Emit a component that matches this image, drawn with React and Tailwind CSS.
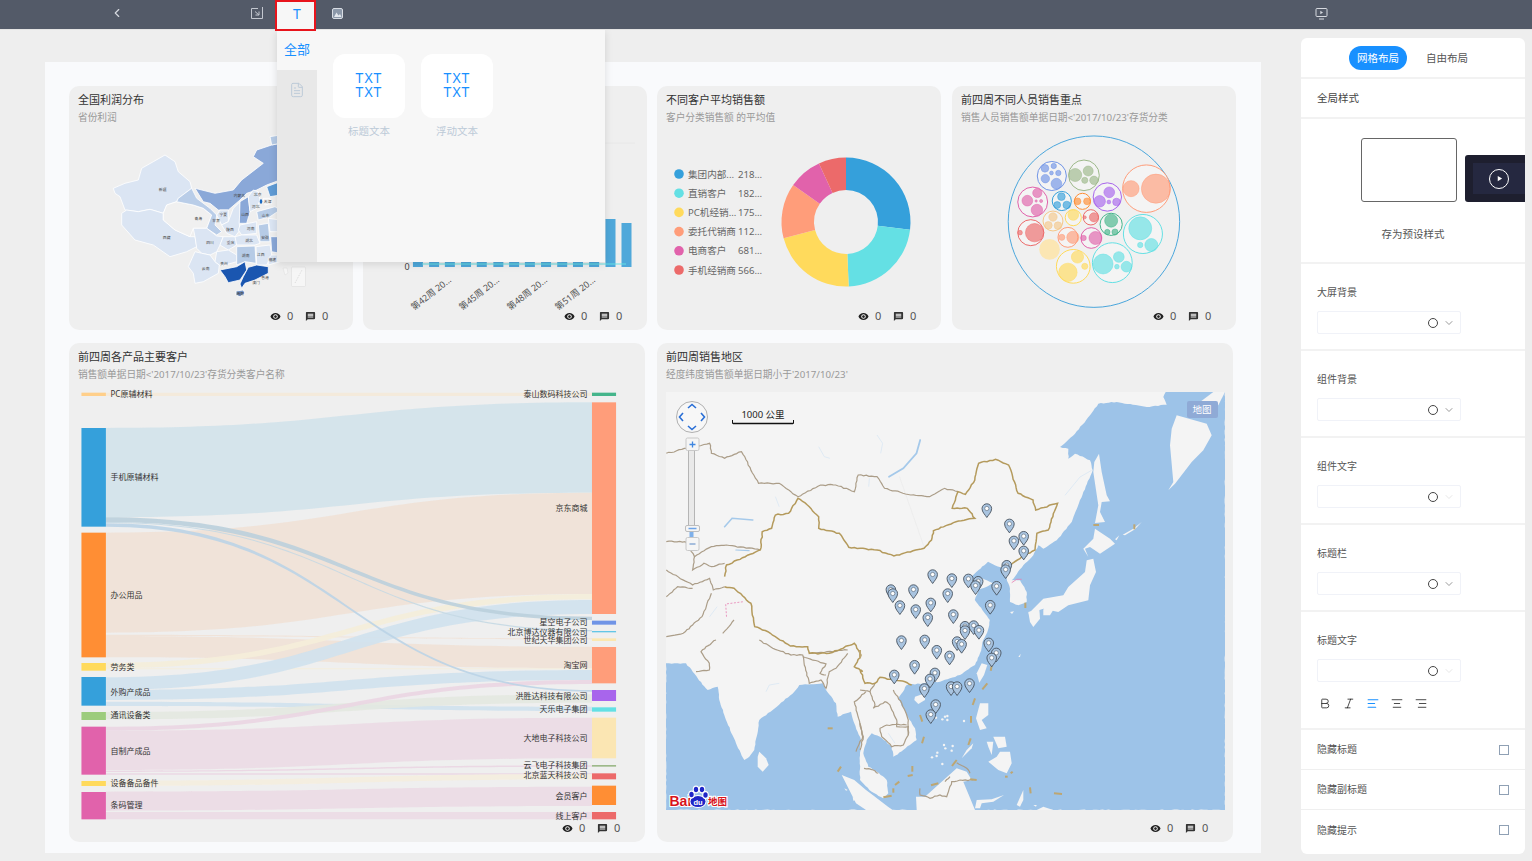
import { ChevronLeft, ChevronDown, Bold, Italic, AlignLeft, AlignCenter, AlignRight, FileText } from 'lucide-react';
import { MdRemoveRedEye, MdMessage } from 'react-icons/md';

// traced coordinates -> page coordinates
const Z6 = (x, y) => [655 + x / 2.658, 340 + y / 3];
const C1 = (x, y) => [100 + x / 3, 130 + y / 3];
const C2 = (x, y) => [1000 + x / 3, 392 + y / 3];
const C3 = (x, y) => [860 + x / 3, 640 + y / 3];
const C4 = (x, y) => [666 + x / 3, 640 + y / 3];

const pts = (fn, list) =>
  list
    .trim()
    .split(/\s+/)
    .map((pair) => {
      const [x, y] = pair.split(',').map(Number);
      return fn(x, y);
    });

const toPoints = (arr) => arr.map((p) => `${p[0].toFixed(1)},${p[1].toFixed(1)}`).join(' ');

let noiseStep = 0;
const noise = () => {
  noiseStep += 1;
  const v = Math.sin(noiseStep * 12.9898) * 43758.5453;
  return (v - Math.floor(v) - 0.5) * 2;
};

// borders and coasts are wobbly in the map tiles
const wobble = (arr, amp) => {
  const out = [];
  for (let i = 0; i < arr.length - 1; i += 1) {
    const [x0, y0] = arr[i];
    const [x1, y1] = arr[i + 1];
    const len = Math.hypot(x1 - x0, y1 - y0) || 1;
    const n = Math.max(1, Math.ceil(len / 3));
    for (let k = 0; k < n; k += 1) {
      const t = k / n;
      const off = k === 0 ? 0 : noise() * amp;
      out.push([x0 + (x1 - x0) * t - ((y1 - y0) / len) * off, y0 + (y1 - y0) * t + ((x1 - x0) / len) * off]);
    }
  }
  out.push(arr[arr.length - 1]);
  return out;
};

const Footer = () => (
  <div className="mt-auto mb-[8px] h-3 flex items-center justify-end pr-[25px] text-[#555] text-[11px] leading-3">
    <MdRemoveRedEye className="w-[11px] h-[11px] text-[#222]" />
    <span className="ml-[6px] w-[6px]">0</span>
    <MdMessage className="ml-[12px] w-[11px] h-[11px] text-[#333]" />
    <span className="ml-[6px] w-[6px]">0</span>
  </div>
);

const Card = ({ title, sub, className, children }) => (
  <div className={`flex flex-col bg-[#efefef] rounded-[10px] overflow-hidden ${className}`}>
    <div className="pl-[9px] pt-[7px] h-[38px]">
      <div className="text-[11px] leading-[14px] text-[#333]">{title}</div>
      <div className="mt-[4px] text-[9.7px] leading-[13px] text-[#999]">{sub}</div>
    </div>
    {children}
    <Footer />
  </div>
);

const provinces = [
  ['40,175 75,160 115,150 125,115 160,95 195,75 225,95 235,125 270,155 275,175 235,205 230,215 200,225 190,250 150,238 115,245 75,240 60,200 45,190', '#dbe5f3'],
  ['65,250 80,240 115,245 150,238 190,250 190,270 225,300 270,320 285,320 290,350 260,365 210,380 160,345 105,330 65,285', '#dbe5f3'],
  ['190,250 200,225 230,215 280,225 310,235 335,255 320,295 280,295 270,320 225,300 190,270', '#f0f0f0'],
  ['235,205 275,175 290,205 330,235 350,255 345,285 365,305 350,315 320,295 335,255 310,235 280,225 230,215', '#b9cde8'],
  ['285,175 345,190 400,180 425,150 490,100 460,80 470,60 515,45 540,40 540,150 500,165 470,180 440,190 420,210 385,240 355,240 330,220 310,215', '#8aa8d8'],
  ['510,20 540,15 540,40 515,45', '#b6cbe6'],
  ['360,240 385,240 385,275 365,285 350,255', '#dbe5f3'],
  ['400,235 420,215 418,280 420,300 405,320 380,310 365,285 385,275', '#dbe5f3'],
  ['420,215 445,200 450,245 440,280 418,280', '#8aa8d8'],
  ['445,200 460,180 475,185 480,210 470,235 450,245', '#dbe5f3'],
  ['500,170 540,155 540,195 510,200', '#5f9bd5'],
  ['490,205 510,205 515,220 495,225', '#f0f0f0'],
  ['470,245 525,230 540,240 510,260 475,270', '#b6cbe6'],
  ['420,285 470,275 470,310 425,315 415,300', '#dbe5f3'],
  ['505,265 540,270 540,305 510,305', '#dbe5f3'],
  ['475,285 505,280 510,335 480,335', '#b6cbe6'],
  ['405,320 425,315 470,315 480,340 465,345 410,345 400,330', '#dbe5f3'],
  ['280,295 320,295 350,318 370,320 360,345 350,365 330,375 305,370 290,355 285,320', '#dbe5f3'],
  ['370,320 405,320 410,345 385,360 360,345', '#dbe5f3'],
  ['265,410 285,365 305,370 330,375 345,395 358,405 355,430 310,455 285,460 280,430', '#dbe5f3'],
  ['345,395 350,365 385,360 410,375 410,395 375,405 358,405', '#dbe5f3'],
  ['410,350 465,348 468,400 435,395 410,405', '#b6cbe6'],
  ['468,350 510,345 515,375 500,405 470,405', '#dbe5f3'],
  ['512,320 540,320 540,370 515,365', '#8aa8d8'],
  ['505,385 515,375 540,375 540,395 505,405', '#dbe5f3'],
  ['360,420 410,410 435,395 440,420 420,450 385,458 375,440', '#1a56b0'],
  ['445,412 470,405 505,410 505,430 465,450 435,460 425,475 420,462 430,440', '#1a56b0'],
  ['408,483 430,480 435,490 420,500 408,495', '#6f90c4'],
];

const provinceLabels = [
  ['新疆', 188, 177], ['西藏', 200, 321], ['青海', 295, 264], ['甘肃', 348, 272], ['宁夏', 370, 252], ['内蒙古', 418, 195],
  ['山西', 435, 252], ['四川', 330, 338], ['云南', 317, 415], ['贵州', 372, 400], ['湖南', 437, 376], ['江西', 482, 372],
  ['福建', 517, 388], ['安徽', 495, 323], ['湖北', 447, 332], ['河南', 452, 295], ['陕西', 390, 298], ['重庆', 392, 338],
  ['山东', 497, 256], ['河北', 467, 228], ['北京', 473, 193], ['天津', 503, 213], ['香港', 495, 442], ['澳门', 468, 458],
  ['海南', 420, 490],
];

const ProfitMap = () => (
  <svg className="block" width="284" height="186" viewBox="69 124 284 186">
    {provinces.map(([list, fill]) => (
      <polygon key={list} points={toPoints(pts(C1, list))} fill={fill} stroke="#fff" strokeWidth="0.8" />
    ))}
    <ellipse cx="261" cy="201.5" rx="1.3" ry="2.2" fill="#1c6ac0" />
    <rect x="291.5" y="267" width="14" height="19.5" rx="1" fill="#f6f6f6" stroke="#ddd" strokeWidth="0.6" />
    <path d="M295 283 302 270" stroke="#bbb" strokeDasharray="1 1" strokeWidth="0.5" />
    <path d="M283 268 287 268 288 273 285 275Z" fill="#f6f6f6" stroke="#ddd" strokeWidth="0.5" />
    {provinceLabels.map(([name, x, y]) => {
      const [px, py] = C1(x, y);
      return (
        <text key={name} x={px} y={py} textAnchor="middle" dominantBaseline="central" fontSize="3.8" fill="#444">{name}</text>
      );
    })}
  </svg>
);

const barXs = [996, 1035, 1073, 1112, 1150, 1190, 1228, 1266, 1305, 1344, 1382, 1421];

const WeekBars = () => (
  <svg className="block" width="284" height="186" viewBox="363 124 284 186">
    <line x1="363" y1="143" x2="635" y2="143" stroke="#e8e8e8" />
    {barXs.map((x) => (
      <rect key={x} x={x / 2.412} y="260" width="10" height="7" fill="#4fa8da" />
    ))}
    <rect x="605.5" y="219" width="10" height="48" fill="#4fa8da" />
    <rect x="621.5" y="223" width="10" height="44" fill="#4fa8da" />
    <line x1="422" y1="264" x2="626" y2="264" stroke="#64e0e4" strokeWidth="1" />
    <text x="407" y="266" textAnchor="middle" dominantBaseline="central" fontSize="9" fill="#444">0</text>
    {[['第42周 20...', 452], ['第45周 20...', 500], ['第48周 20...', 548], ['第51周 20...', 596]].map(([label, x]) => (
      <text key={label} x={x} y="281" textAnchor="end" fontSize="9" fill="#555" transform={`rotate(-38 ${x} 281)`}>{label}</text>
    ))}
  </svg>
);

const donutData = [
  ['集团内部...', '218...', 0, 96.8, '#35a0db'],
  ['直销客户', '182...', 96.8, 177.6, '#64e0e4'],
  ['PC机经销...', '175...', 177.6, 255.3, '#ffda5c'],
  ['委托代销商', '112...', 255.3, 305, '#ff9d7a'],
  ['电商客户', '681...', 305, 335.2, '#e162ab'],
  ['手机经销商', '566...', 335.2, 360, '#ec6a6a'],
];

const arc = (start, end, r0, r1, cx, cy) => {
  const pt = (a, r) => {
    const t = ((a - 90) * Math.PI) / 180;
    return `${cx + r * Math.cos(t)} ${cy + r * Math.sin(t)}`;
  };
  const big = end - start > 180 ? 1 : 0;
  return `M${pt(start, r1)} A${r1} ${r1} 0 ${big} 1 ${pt(end, r1)} L${pt(end, r0)} A${r0} ${r0} 0 ${big} 0 ${pt(start, r0)} Z`;
};

const Donut = () => (
  <svg className="block" width="284" height="186" viewBox="657 124 284 186">
    {donutData.map(([name, value, a, b, color], i) => {
      const y = 174 + i * 19.2;
      return (
        <g key={name}>
          <circle cx="679" cy={y} r="4.8" fill={color} />
          <text x="688" y={y} dominantBaseline="central" fontSize="9.6" fill="#666">{name}</text>
          <text x="738" y={y} dominantBaseline="central" fontSize="9.6" fill="#666">{value}</text>
          <path d={arc(a, b, 32, 64.5, 846, 222)} fill={color} />
        </g>
      );
    })}
  </svg>
);

const bubbles = [
  [1050, 318, 38, '#7094e6', [[1032, 295, 10], [1055, 288, 7], [1067, 309, 7], [1049, 309, 5], [1033, 326, 11], [1062, 341, 14]]],
  [1134, 316, 40, '#9db98a', [[1111, 315, 17], [1145, 303, 13], [1160, 331, 11], [1136, 331, 8]]],
  [1297, 356, 62, '#ff9d7a', [[1257, 356, 21], [1322, 356, 38]]],
  [1195, 381, 37, '#a865ec', [[1200, 367, 14], [1175, 394, 15], [1219, 396, 10], [1199, 396, 5]]],
  [1076, 393, 25, '#35a0db', [[1075, 380, 10], [1064, 405, 9], [1089, 405, 10]]],
  [1130, 394, 21, '#ff8e34', [[1117, 394, 9], [1142, 394, 9]]],
  [1000, 396, 39, '#e162ab', [[1012, 369, 12], [986, 392, 14], [1011, 420, 15], [1022, 393, 4], [1009, 393, 3]]],
  [1053, 453, 26, '#f5c88a', [[1053, 441, 11], [1041, 466, 10], [1066, 467, 10]]],
  [1106, 443, 21, '#ffda5c', [[1106, 435, 14]]],
  [1152, 442, 20, '#ec6a6a', [[1160, 442, 12], [1136, 442, 4]]],
  [1205, 463, 29, '#45b58b', [[1205, 452, 17], [1195, 486, 7], [1215, 486, 8]]],
  [1288, 492, 51, '#64e0e4', [[1281, 475, 30], [1310, 525, 17], [1281, 525, 7]]],
  [995, 488, 34, '#ec6a6a', [[1005, 488, 24], [967, 488, 6]]],
  [1092, 502, 26, '#ff9d7a', [[1105, 502, 16], [1076, 502, 8]]],
  [1153, 504, 27, '#e162ab', [[1164, 504, 17], [1133, 504, 7]]],
  [1106, 589, 44, '#ffda5c', [[1117, 561, 16], [1092, 607, 24], [1136, 589, 8]]],
  [1208, 578, 52, '#64e0e4', [[1184, 582, 26], [1225, 561, 14], [1245, 590, 14], [1220, 590, 6]]],
];

const bx = (x) => 650 + x / 2.613;
const by = (y) => 70 + y / 3;
const br = (r) => r / 2.613;

const Bubbles = () => (
  <svg className="block" width="284" height="186" viewBox="952 124 284 186">
    <circle cx={bx(1160)} cy={by(455)} r="85.7" fill="#f0f0f0" stroke="#4aa6dc" strokeWidth="1" />
    <circle cx={bx(1044)} cy={by(538)} r={br(27)} fill="#fbe6b3" />
    {bubbles.map(([x, y, r, color, kids]) => (
      <g key={`${x}-${y}`}>
        <circle cx={bx(x)} cy={by(y)} r={br(r)} fill="#f4f4f4" stroke={color} strokeWidth="1" />
        {kids.map(([kx, ky, kr]) => (
          <circle key={`${kx}-${ky}`} cx={bx(kx)} cy={by(ky)} r={br(kr)} fill={color} fillOpacity="0.65" stroke={color} strokeWidth="0.5" />
        ))}
      </g>
    ))}
  </svg>
);

const ribbons = [
  [158, 168, 158, 168, '#f5e9d8'],
  [264, 532, 187, 458, '#d2e2ea'],
  [578, 878, 458, 762, '#f0e1d6'],
  [884, 888, 895, 898, '#f0e1d6'],
  [888, 952, 920, 985, '#f0e1d6'],
  [968, 985, 762, 778, '#f5eed9'],
  [985, 988, 985, 988, '#f5eed9'],
  [1012, 1050, 780, 822, '#cfe1ee'],
  [1050, 1080, 990, 1020, '#cfe1ee'],
  [1085, 1098, 1100, 1113, '#cfe1ee'],
  [1116, 1138, 1063, 1088, '#e4e8e0'],
  [1160, 1172, 1020, 1032, '#ead5e3'],
  [1172, 1290, 1133, 1255, '#ecdbe5'],
  [1292, 1296, 1276, 1280, '#ead5e3'],
  [1300, 1304, 1300, 1304, '#ead5e3'],
  [1322, 1338, 1302, 1318, '#f5eede'],
  [1355, 1412, 1340, 1398, '#ecdbe5'],
  [1416, 1438, 1416, 1438, '#ecdbe5'],
  [532, 546, 830, 840, '#b9cfdc'],
  [546, 549, 870, 874, '#c4d8e4'],
  [550, 560, 1050, 1055, '#b9d3e6'],
];

const leftNodes = [
  [158, 168, '#ffcf8a', 'PC原辅材料', 162],
  [264, 560, '#35a0db', '手机原辅材料', 412],
  [578, 952, '#ff8e34', '办公用品', 765],
  [969, 992, '#ffda5c', '劳务类', 981],
  [1011, 1097, '#35a0db', '外购产成品', 1056],
  [1116, 1140, '#9ccc7c', '通讯设备类', 1127],
  [1160, 1304, '#e162ab', '自制产成品', 1234],
  [1323, 1338, '#ffda5c', '设备备品备件', 1331],
  [1356, 1438, '#e162ab', '条码管理', 1396],
];

const rightNodes = [
  [158, 168, '#45b58b', '泰山数码科技公司', 162],
  [187, 822, '#ff9d7a', '京东商城', 506],
  [842, 854, '#7094e6', '星空电子公司', 848],
  [873, 877, '#63c6e6', '北京博达仪器有限公司', 876],
  [895, 903, '#fbe7b0', '世纪天华集团公司', 900],
  [921, 1030, '#ff9d7a', '淘宝网', 976],
  [1050, 1083, '#a865ec', '洪胜达科技有限公司', 1068],
  [1102, 1115, '#63e0e4', '天乐电子集团', 1108],
  [1133, 1255, '#fbe6b3', '大地电子科技公司', 1195],
  [1275, 1280, '#9db98a', '云飞电子科技集团', 1276],
  [1300, 1318, '#ec6a6a', '北京蓝天科技公司', 1307],
  [1337, 1395, '#ff8e34', '会员客户', 1368],
  [1416, 1438, '#ec6a6a', '线上客户', 1428],
];

const Sankey = () => (
  <svg className="block mt-[7px]" width="576" height="434" viewBox="69 388 576 434">
    <g transform={`translate(60 340) scale(${1 / 2.658} ${1 / 3})`}>
      {ribbons.map(([a, b, c, d, color]) => (
        <path
          key={`${a}-${c}`}
          d={`M122 ${a} C768 ${a} 768 ${c} 1414 ${c} L1414 ${d} C768 ${d} 768 ${b} 122 ${b} Z`}
          fill={color}
          fillOpacity="0.88"
        />
      ))}
      {leftNodes.map(([a, b, color]) => (
        <rect key={a} x="57" y={a} width="65" height={b - a} fill={color} />
      ))}
      {rightNodes.map(([a, b, color]) => (
        <rect key={a} x="1414" y={a} width="64" height={b - a} fill={color} />
      ))}
    </g>
    {leftNodes.map(([a, , , label, y]) => (
      <text key={a} x="110.5" y={339 + y / 3} dominantBaseline="central" fontSize="8" fill="#333">{label}</text>
    ))}
    {rightNodes.map(([a, , , label, y]) => (
      <text key={a} x="587.5" y={339 + y / 3} textAnchor="end" dominantBaseline="central" fontSize="8" fill="#333">{label}</text>
    ))}
  </svg>
);

const LAND = '#f4f4f4';

const seaPolygon = toPoints(
  wobble(
    [
      [1225, 392],
      [1225, 810],
      [666, 810],
      ...pts(C4, '0,70 60,70 80,95 95,115 125,150 155,140 160,180 180,240 210,310 235,360 250,350 265,330 280,240 320,210 385,155 400,135 470,130 480,150 510,190 515,230 555,215 565,250 585,300 582,338'),
      ...pts(C3, '0,420 35,455 70,475 85,460 80,420 50,395 25,380 10,340 20,300 35,280 60,290 95,320 100,350 130,330 170,300 165,265 140,225 115,175 140,135 190,130 240,125 300,105 345,75 360,40 370,0'),
      ...pts(Z6, '885,870 890,840 870,810 850,780 860,750 900,730 870,715 838,715 860,690 885,665 925,685'),
      ...pts(C2, '30,590 30,630 55,640 80,630 80,600 60,565 35,565 70,520 100,490 115,460 130,470 170,445 215,390 250,300 278,235 270,205 225,185 205,200 205,170 180,165 225,125 270,70 295,35 350,30 440,45 500,38 490,15 497,0'),
    ],
    0.45,
  ),
);

const landShapes = [
  [C2, '297,185 305,240 320,310 330,328 305,330 300,360 315,390 285,393 295,340 280,240 283,210'],
  [C2, '285,410 330,440 345,455 300,485 270,465 255,470 265,495 250,470 280,440'],
  [C2, '345,442 358,430 350,445'],
  [C2, '368,428 400,410 425,390 405,412 375,430'],
  [C2, '260,505 280,500 288,540 270,580 265,625 205,640 175,660 130,650 85,665 130,620 190,610 205,585 255,540'],
  [C2, '85,660 118,650 120,680 100,705 90,690'],
  [C2, '130,652 165,645 150,670 130,670'],
  [C2, '530,70 620,95 635,130 610,175 575,210 525,275 505,295 520,270 510,160 515,110'],
  [C2, '600,30 640,0 675,0 655,40'],
  [C2, '30,660 42,658 36,666'],
  [C2, '55,795 62,785 60,795'],
  [C3, '365,70 382,75 372,105 358,128 350,100'],
  [C3, '165,170 195,160 195,180 175,192 163,180'],
  [C3, '360,190 385,190 385,225 365,240 380,265 360,270 348,235'],
  [C3, '420,335 450,335 455,370 440,400 415,390 385,365 410,350'],
  [C3, '380,305 400,305 395,345 385,320'],
  [C3, '400,290 435,290 440,320 415,325'],
  [C3, '340,310 335,325 305,355 320,330'],
  [C3, '170,510 168,470 195,470 240,430 290,385 320,395 335,420 310,425 345,510'],
  [C3, '345,505 350,480 395,478 432,465 400,485 365,490 360,505'],
  [C3, '470,495 490,450 490,480 480,500'],
  [C3, '520,495 530,495 528,500'],
  [C3, '530,510 550,500 580,510'],
  [C4, '280,335 300,355 308,375 290,395 275,380 275,350'],
  [C4, '535,445 545,450 540,452'],
  [C4, '560,470 570,480 562,482'],
  [C4, '527,405 565,420 600,450 620,465 666,500 680,510 600,510 570,490'],
];

const dots = [
  [255, 230], [262, 228], [247, 238], [262, 240], [312, 243], [252, 315], [278, 318], [256, 325], [275, 332],
  [232, 338], [230, 348], [216, 352], [247, 372], [228, 233],
];

const chinaBorder = [
  pts(Z6, '185,710 190,675 240,650 280,630 285,575 310,565 320,525 355,520 380,475 410,500 435,530 435,565 490,580 515,622 590,630 635,648 715,625 735,600 740,572 800,545 850,535 830,505 790,505 805,455 825,463 850,420 860,370 905,358 940,375 965,460 1005,480 1012,510 1070,490 1045,570 1015,580 1010,630 975,650 940,680'),
  [
    ...pts(Z6, '185,740 210,745 255,790 265,860 300,875 360,918'),
    ...pts(C4, '400,20 425,20 430,40 490,40 565,10 585,45 565,80 590,95'),
    ...pts(C3, '0,90 15,130 45,130 60,112 105,120 135,125 155,135'),
  ],
];

const otherBorders = [
  pts(Z6, '30,340 85,325 145,310 150,340 185,355 230,335 275,430 330,430 380,470 440,435 480,435 530,455 540,405 590,410 610,445 680,465 730,470 770,445 805,455'),
  pts(Z6, '30,605 80,605 105,650 150,620 190,615 280,630'),
  pts(Z6, '105,650 100,690 130,670 150,680 185,670'),
  pts(Z6, '30,690 100,735 145,715 155,750 185,740'),
  pts(Z6, '30,770 60,740 100,745'),
  pts(Z6, '30,890 75,880 100,855 125,830 150,760'),
  pts(Z6, '210,840 180,880'),
  pts(C4, '150,0 120,20 105,35 130,70 130,90 90,95'),
  pts(C4, '280,0 320,25 375,45 410,45 415,75 430,130 465,120 480,145 490,95 510,85 545,40'),
  pts(C4, '430,40 545,30'),
  pts(C4, '410,50 480,72 462,100 480,105'),
  pts(C4, '600,155 565,185 585,260 590,290 570,335'),
  pts(C3, '45,130 30,155 45,195 40,205 75,185 90,195 110,240 110,260 145,260 145,285 130,315 95,320 65,290 60,265 80,255 140,255'),
  pts(C3, '100,150 125,190 145,240 145,285'),
  pts(C3, '0,150 30,155'),
  pts(C3, '0,250 10,290 0,330'),
  pts(C3, '12,385 40,390 55,400'),
  pts(C3, '180,445 180,465 210,475 240,465 260,470 275,425 300,420 340,420'),
  pts(C3, '290,368 320,385 330,400'),
  pts(C3, '255,425 270,410'),
].map((arr) => wobble(arr, 0.6));

const chinaWobbled = chinaBorder.map((arr) => wobble(arr, 0.6));

const dashes = [
  ...[[0, 30, 0, 55], [180, 225, 187, 245], [192, 290, 186, 310], [332, 295, 325, 315], [345, 175, 338, 195], [382, 130, 367, 148], [395, 78, 392, 92], [333, 228, 333, 248], [290, 360, 276, 378], [157, 378, 157, 395], [158, 405, 143, 408], [118, 425, 105, 435], [100, 445, 100, 458], [95, 467, 70, 472], [235, 430, 213, 436], [510, 442, 512, 460], [582, 460, 606, 462], [330, 418, 350, 420], [435, 410, 443, 410], [458, 395, 452, 400]].map(([a, b, c, d]) => [C3(a, b), C3(c, d)]),
  ...[[280, 399, 297, 399], [403, 397, 403, 412], [76, 632, 76, 648]].map(([a, b, c, d]) => [C2(a, b), C2(c, d)]),
  ...[[485, 265, 500, 265], [515, 395, 525, 380]].map(([a, b, c, d]) => [C4(a, b), C4(c, d)]),
];

// big lakes stay solid, the rest of the water is barely visible
const lakes = [
  [Z6, '705,300 695,340 660,385 622,410', 1.8],
  [Z6, '185,560 205,535 260,540', 1.6],
  [Z6, '215,630 250,632', 1.2],
];

const streams = [
  [Z6, '590,285 605,310 600,340'],
  [Z6, '435,320 450,350 465,355'],
  [Z6, '320,470 330,500'],
  [Z6, '570,415 568,440'],
  [Z6, '145,830 165,800'],
  [C4, '300,155 310,135 340,130'],
  [C3, '85,280 105,310'],
  [C2, '195,310 240,255 275,235'],
];

const pins = [
  [882, 507], [942, 553], [980, 590], [954, 604], [980, 634], [935, 677], [932, 690], [738, 705], [789, 717], [833, 718],
  [859, 725], [852, 738], [908, 740], [627, 750], [632, 762], [687, 750], [778, 762], [733, 790], [651, 798], [693, 810],
  [891, 797], [725, 834], [793, 825], [824, 860], [847, 858], [824, 873], [861, 872], [655, 903], [717, 901], [803, 906],
  [815, 914], [887, 910], [749, 932], [907, 940], [895, 955], [783, 949], [690, 977], [636, 1006], [744, 1000], [731, 1018],
  [716, 1047], [787, 1041], [803, 1041], [836, 1032], [746, 1095], [733, 1125],
];

const Pin = ({ x, y }) => {
  const [px, py] = Z6(x, y);
  return (
    <g transform={`translate(${px} ${py})`}>
      <path d="M0 8.5 C-2 5.5 -4.8 3 -4.8 -0.4 A4.8 4.8 0 1 1 4.8 -0.4 C4.8 3 2 5.5 0 8.5 Z" fill="#a9c4e0" stroke="#47525f" strokeWidth="0.9" />
      <circle cx="0" cy="-0.5" r="2.1" fill="#fff" stroke="#47525f" strokeWidth="0.5" />
    </g>
  );
};

const BaiduMap = () => (
  <svg className="block mt-[11px] ml-[9px]" width="559" height="418" viewBox="666 392 559 418">
    <rect x="666" y="392" width="559" height="418" fill={LAND} />
    <polygon points={seaPolygon} fill="#9dc3e8" />
    {landShapes.map(([fn, list]) => (
      <polygon key={list} points={toPoints(pts(fn, list))} fill={LAND} />
    ))}
    {dots.map(([x, y]) => {
      const [cx, cy] = C3(x, y);
      return <circle key={`${x}-${y}`} cx={cx} cy={cy} r="1.2" fill={LAND} />;
    })}
    {streams.map(([fn, list]) => (
      <polyline key={list} points={toPoints(pts(fn, list))} fill="none" stroke="#d5e5f4" strokeWidth="0.7" />
    ))}
    {lakes.map(([fn, list, w]) => (
      <polyline key={list} points={toPoints(pts(fn, list))} fill="none" stroke="#a5c9ea" strokeWidth={w} strokeLinecap="round" />
    ))}
    <polyline points={toPoints(pts(Z6, '650,410 715,620'))} fill="none" stroke="#e6e6e6" strokeWidth="0.5" />
    {otherBorders.map((arr, i) => (
      <polyline key={i} points={toPoints(arr)} fill="none" stroke="#ab9d88" strokeWidth="1.2" />
    ))}
    {chinaWobbled.map((arr, i) => (
      <polyline key={i} points={toPoints(arr)} fill="none" stroke="#b49a5c" strokeWidth="1.5" />
    ))}
    {dashes.map(([a, b], i) => (
      <line key={i} x1={a[0]} y1={a[1]} x2={b[0]} y2={b[1]} stroke="#bda672" strokeWidth="2" />
    ))}
    <polyline points={toPoints(pts(Z6, '190,830 188,792 235,785'))} fill="none" stroke="#e77fb2" strokeWidth="0.8" strokeDasharray="2 1.5" />
    <polyline points={toPoints(pts(C2, '35,572 50,562 65,562'))} fill="none" stroke="#e77fb2" strokeWidth="0.8" />
    {pins.map(([x, y]) => (
      <Pin key={`${x}-${y}`} x={x} y={y} />
    ))}

    {/* pan control */}
    <circle cx="692" cy="417" r="15.5" fill="#f7f7f7" stroke="#b0b0b0" />
    <g fill="none" stroke="#2a6fd6" strokeWidth="1.6">
      <path d="M688 408 692 404.5 696 408" />
      <path d="M688 426 692 429.5 696 426" />
      <path d="M683 413 679.5 417 683 421" />
      <path d="M701 413 704.5 417 701 421" />
    </g>

    {/* zoom slider */}
    <rect x="688.5" y="450" width="6" height="76" fill="#e9e9e9" stroke="#b5b5b5" />
    <rect x="689.5" y="531" width="4" height="7" fill="#7fb0ea" />
    <rect x="686" y="438" width="13" height="12.5" rx="1.5" fill="#f5f5f5" stroke="#c8c8c8" />
    <path d="M689.5 444.5H695.5M692.5 441.5V447.5" stroke="#3f86e0" strokeWidth="1.3" />
    <rect x="685.5" y="525.5" width="14" height="6" rx="1.5" fill="#f5f5f5" stroke="#bdbdbd" />
    <path d="M688.5 528.5H696.5" stroke="#6ea4e8" strokeWidth="1.5" />
    <rect x="686" y="537.5" width="13" height="13" rx="1.5" fill="#f5f5f5" stroke="#c8c8c8" />
    <path d="M689.5 544H695.5" stroke="#7a9fd0" strokeWidth="1.3" />

    {/* scale */}
    <text x="763" y="414" textAnchor="middle" dominantBaseline="central" fontSize="9.5" fill="#222">1000 公里</text>
    <path d="M732.5 420V423.5H793.5V420" fill="none" stroke="#111" strokeWidth="1" />
    <path d="M733 423.5H793" stroke="#111" strokeWidth="1.4" />

    {/* map type */}
    <rect x="1187" y="401" width="31" height="17" rx="2" fill="#8faad6" />
    <text x="1202" y="409.5" textAnchor="middle" dominantBaseline="central" fontSize="9.5" fill="#fff">地图</text>

    {/* logo */}
    <g stroke="#fff" strokeWidth="2.2" style={{ paintOrder: 'stroke' }}>
      <text x="669.5" y="805.5" fontFamily="Liberation Sans" fontWeight="bold" fontSize="14" fill="#d8141c">Bai</text>
      <text x="708" y="805" fontSize="9.5" fontWeight="bold" fill="#d8141c">地图</text>
      <g fill="#1f26c8">
        <ellipse cx="698" cy="801.5" rx="7.5" ry="5.5" />
        <ellipse cx="691.5" cy="794.5" rx="2.2" ry="2.8" />
        <ellipse cx="696" cy="789.5" rx="2.2" ry="2.8" />
        <ellipse cx="702" cy="789.5" rx="2.2" ry="2.8" />
        <ellipse cx="705.5" cy="795" rx="2.2" ry="2.8" />
      </g>
    </g>
    <text x="698" y="805" textAnchor="middle" fontFamily="Liberation Sans" fontWeight="bold" fontSize="7.5" fill="#fff">du</text>
  </svg>
);

const ColorField = ({ muted }) => (
  <div className="w-[144px] h-[23px] border border-[#f0f2f8] rounded-[2px] flex items-center justify-end pr-[5px] gap-[5px]">
    <span className="w-[10px] h-[10px] rounded-full border border-[#444]" />
    <ChevronDown className={`w-3 h-3 ${muted ? 'text-[#ddd]' : 'text-[#777]'}`} strokeWidth={1.5} />
  </div>
);

const StyleSection = ({ label, muted, children }) => (
  <div className={`pl-4 pt-[21px] border-b-2 border-[#f2f2f2] ${children ? 'h-[118px]' : 'h-[87px]'}`}>
    <div className="text-[10px] leading-[14px] text-[#555] mb-[12px]">{label}</div>
    <ColorField muted={muted} />
    {children}
  </div>
);

const ToggleRow = ({ label, className }) => (
  <div className={`pl-4 pr-4 flex items-center justify-between border-b border-[#efefef] ${className}`}>
    <span className="text-[10px] text-[#555]">{label}</span>
    <span className="w-[10px] h-[10px] border border-[#8fa0b4]" />
  </div>
);

const Settings = () => (
  <div className="ml-[40px] mt-[8px] w-[224px] h-[816px] bg-white rounded-[6px] overflow-hidden">
    <div className="h-[41px] pt-px border-b-2 border-[#f2f2f2] flex items-center pl-[48px]">
      <div className="w-[58px] h-[24px] pt-px rounded-full bg-[#1890ff] text-white text-[10.5px] flex items-center justify-center">网格布局</div>
      <div className="ml-[19px] mt-[2px] text-[10.5px] text-[#555]">自由布局</div>
    </div>
    <div className="h-[40px] pt-[2px] border-b-2 border-[#f2f2f2] flex items-center pl-4 text-[10.5px] text-[#444]">全局样式</div>
    <div className="h-[145px] border-b-2 border-[#f2f2f2]">
      <div className="flex items-end pl-[60px] pt-[19px] w-[300px]">
        <div className="w-[96px] h-[64px] bg-white border border-[#666] rounded-[3px]" />
        <div className="ml-[8px] w-[80px] h-[47px] bg-[#1e1f2f] rounded-[3px] pl-2 pt-2">
          <div className="w-[52px] h-[31px] bg-[#252840] flex items-center justify-center">
            <span className="w-[20px] h-[20px] rounded-full border border-white flex items-center justify-center">
              <svg width="7" height="7" viewBox="0 0 8 8"><path d="M2 1 7 4 2 7Z" fill="#fff" /></svg>
            </span>
          </div>
        </div>
      </div>
      <div className="mt-[25px] text-center text-[10.5px] leading-[14px] text-[#555]">存为预设样式</div>
    </div>
    <StyleSection label="大屏背景" />
    <StyleSection label="组件背景" />
    <StyleSection label="组件文字" muted />
    <StyleSection label="标题栏" />
    <StyleSection label="标题文字" muted>
      <div className="flex gap-2 mt-[15px] text-[#222]">
        <Bold className="w-4 h-[13px]" strokeWidth={1.5} />
        <Italic className="w-4 h-[13px]" strokeWidth={1.5} />
        <AlignLeft className="w-4 h-[13px] text-[#1890ff]" strokeWidth={2} />
        <AlignCenter className="w-4 h-[13px]" strokeWidth={1.5} />
        <AlignRight className="w-4 h-[13px]" strokeWidth={1.5} />
      </div>
    </StyleSection>
    <ToggleRow label="隐藏标题" className="h-[40px]" />
    <ToggleRow label="隐藏副标题" className="h-[40px]" />
    <ToggleRow label="隐藏提示" className="h-[40px] border-b-0" />
  </div>
);

const TopBar = () => (
  <div className="h-[30px] pb-[3px] bg-[#535a68] border-b border-[#e4e4e4] flex items-center relative z-20 text-[#d7dae0]">
    <ChevronLeft className="ml-[110px] w-[14px] h-[14px]" strokeWidth={2} />
    <svg className="ml-[126px]" width="14" height="14" viewBox="0 0 14 14" fill="none" stroke="#c3c7cf" strokeWidth="1">
      <path d="M8 2.5H1.5V12.5H12.5V1" />
      <path d="M5 5.5 9 9M9 5.5V9H5.5" />
    </svg>
    <div className="ml-[11px] w-[41px] h-[31px] self-start bg-[#f7f7f7] border-2 border-[#e8141c] flex items-center justify-center pl-[3px] pb-[5px] text-[#1890ff] text-[14px]">T</div>
    <svg className="ml-[15px]" width="13" height="13" viewBox="0 0 13 13">
      <rect x="1.5" y="1.5" width="10" height="10" rx="1.5" fill="#8d99aa" stroke="#d9dde4" />
      <path d="M3 10 5.5 5.5 7.5 8.5 9 7 10.5 10Z" fill="#e4e8ee" />
    </svg>
    <svg className="ml-[971px]" width="13" height="13" viewBox="0 0 13 13" fill="none" stroke="#d7dae0">
      <rect x="1" y="1.5" width="11" height="8" rx="1" />
      <path d="M4 12H9" />
      <path d="M5.3 3.8 8 5.5 5.3 7.2Z" fill="#d7dae0" stroke="none" />
    </svg>
  </div>
);

const WidgetTile = ({ label, className }) => (
  <div className={`w-[72px] ${className}`}>
    <div className="h-[64px] pb-[3px] rounded-[12px] bg-white flex items-center justify-center text-[14px] tracking-[1px] leading-[14px] text-[#1890ff] text-center">
      TXT<br />TXT
    </div>
    <div className="mt-[6px] text-center text-[10.5px] leading-[14px] text-[#bccad8]">{label}</div>
  </div>
);

const WidgetPopup = () => (
  <div className="absolute left-[277px] top-[30px] z-10 w-[328px] h-[232px] bg-[#f7f7f7] flex shadow-[0_2px_8px_rgba(0,0,0,0.12)]">
    <div className="w-[40px] flex flex-col">
      <div className="h-[40px] pl-[7px] flex items-center text-[13px] text-[#1890ff]">全部</div>
      <div className="flex-1 bg-[#e8e8e8] flex justify-center pt-[11px]">
        <FileText className="w-[16px] h-[18px] text-[#bccad8]" strokeWidth={1.5} />
      </div>
    </div>
    <div className="flex pl-[16px] pt-[24px]">
      <WidgetTile label="标题文本" />
      <WidgetTile label="浮动文本" className="ml-[16px]" />
    </div>
  </div>
);

export default function App() {
  return (
    <div className="relative w-[1532px] h-[861px] overflow-hidden bg-[#eeeeee] font-['Noto_Sans','Noto_Sans_CJK_SC',sans-serif]">
      <TopBar />
      <WidgetPopup />
      <div className="flex">
        <div className="ml-[45px] mt-[32px] w-[1216px] h-[791px] bg-[#f9fafc] pl-[24px] pt-[24px]">
          <div className="flex gap-[10px]">
            <Card title="全国利润分布" sub="省份利润" className="w-[284px] h-[244px]">
              <ProfitMap />
            </Card>
            <Card className="w-[284px] h-[244px]">
              <WeekBars />
            </Card>
            <Card title="不同客户平均销售额" sub="客户分类销售额 的平均值" className="w-[284px] h-[244px]">
              <Donut />
            </Card>
            <Card title="前四周不同人员销售重点" sub="销售人员销售额单据日期<'2017/10/23'存货分类" className="ml-px w-[284px] h-[244px]">
              <Bubbles />
            </Card>
          </div>
          <div className="flex gap-[12px] mt-[13px]">
            <Card title="前四周各产品主要客户" sub="销售额单据日期<'2017/10/23'存货分类客户名称" className="w-[576px] h-[499px]">
              <Sankey />
            </Card>
            <Card title="前四周销售地区" sub="经度纬度销售额单据日期小于'2017/10/23'" className="w-[576px] h-[499px]">
              <BaiduMap />
            </Card>
          </div>
        </div>
        <Settings />
      </div>
    </div>
  );
}
